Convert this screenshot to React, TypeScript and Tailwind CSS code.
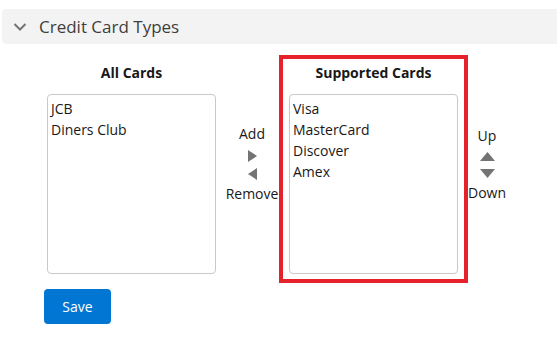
import React from 'react';

const allCards = ['JCB', 'Diners Club'];
const supported = ['Visa', 'MasterCard', 'Discover', 'Amex'];

const ListBox = ({ items }: { items: string[] }) => (
  <div className="w-[169px] h-[180px] border border-[#c9c9c9] rounded-[4px] bg-white pt-[3px] pl-[3px]">
    {items.map((it) => (
      <div key={it} className="text-[14px] leading-[21px] text-[#181818]">
        {it}
      </div>
    ))}
  </div>
);

const Tri = ({ dir }: { dir: 'right' | 'left' | 'up' | 'down' }) => {
  if (dir === 'right')
    return (
      <svg width="9" height="12" viewBox="0 0 9 12">
        <path d="M0 0 L9 6 L0 12 Z" fill="#747474" />
      </svg>
    );
  if (dir === 'left')
    return (
      <svg width="9" height="12" viewBox="0 0 9 12">
        <path d="M9 0 L0 6 L9 12 Z" fill="#747474" />
      </svg>
    );
  if (dir === 'up')
    return (
      <svg width="15" height="9" viewBox="0 0 15 9">
        <path d="M0 9 L7.5 0 L15 9 Z" fill="#747474" />
      </svg>
    );
  return (
    <svg width="15" height="9" viewBox="0 0 15 9">
      <path d="M0 0 L7.5 9 L15 0 Z" fill="#747474" />
    </svg>
  );
};

export default function App() {
  return (
    <div className="w-[557px] h-[337px] bg-white font-['Open_Sans',sans-serif] text-[#181818] overflow-hidden">
      <div className="pt-[9px] pl-[2px]">
        <div className="h-[35px] bg-[#f3f3f3] rounded-l-[4px] flex items-center pl-[11px]">
          <svg width="14" height="10" viewBox="0 0 14 10" className="mr-[12px]">
            <path d="M1.5 2 L7 7.5 L12.5 2" fill="none" stroke="#747474" strokeWidth="2" />
          </svg>
          <span className="text-[17px] text-[#3e3e3c]">Credit Card Types</span>
        </div>
      </div>

      <div className="flex items-start mt-[11px] pl-[47px]">
        <div className="flex flex-col pt-[7px]">
          <div className="h-[22px] leading-[22px] text-center text-[14px] font-bold mb-[10px]">All Cards</div>
          <ListBox items={allCards} />
        </div>

        <div className="ml-[10px] w-[52px] flex flex-col items-center pt-[69px] text-[14px] leading-[20px]">
          <span>Add</span>
          <div className="mt-[6px] h-[12px]">
            <Tri dir="right" />
          </div>
          <div className="mt-[6px] h-[12px]">
            <Tri dir="left" />
          </div>
          <span className="mt-[4px]">Remove</span>
        </div>

        <div className="ml-[1px] w-[189px] h-[228px] border-4 border-[#e52129] px-[6px] pt-[3px]">
          <div className="h-[22px] leading-[22px] text-center text-[14px] font-bold mb-[10px]">Supported Cards</div>
          <ListBox items={supported} />
        </div>

        <div className="w-[38px] flex flex-col items-center pt-[71px] text-[14px] leading-[20px]">
          <span>Up</span>
          <div className="mt-[6px] h-[9px]">
            <Tri dir="up" />
          </div>
          <div className="mt-[8px] h-[9px]">
            <Tri dir="down" />
          </div>
          <span className="mt-[5px]">Down</span>
        </div>
      </div>

      <div className="pl-[44px] mt-[6px]">
        <button className="w-[67px] h-[35px] rounded-[4px] bg-[#0176d3] text-white text-[14px]">Save</button>
      </div>
    </div>
  );
}
